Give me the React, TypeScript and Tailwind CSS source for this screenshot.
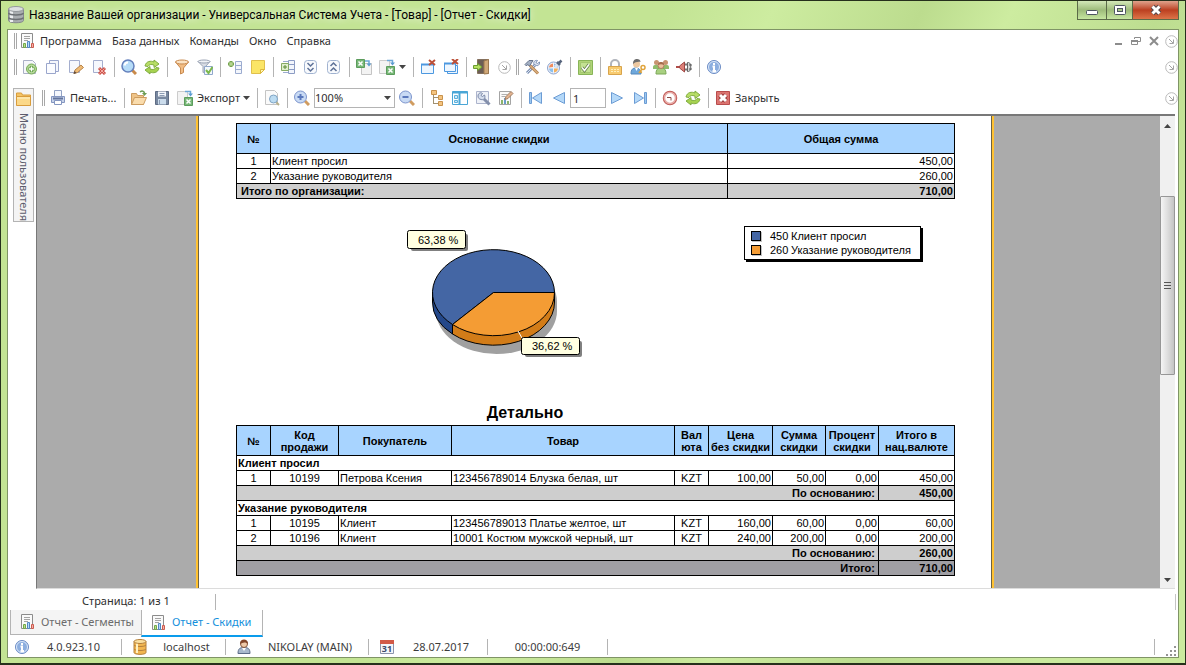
import React from 'react';

const icons: Record<string, React.ReactNode> = {
  report: (
    <>
      <path d="M2.500.5h11v14h-11z" fill="#fafafa" stroke="#8c8c8c" />
      <path d="M5 3.500h6M5 5.500h6M5 7.500h4" stroke="#a4a4a4" />
      <path d="M4.500 10.500h2v4h-2z" fill="#b9de8c" stroke="#72a84a" />
      <path d="M8.500 8.500h2v6h-2z" fill="#b4d8f8" stroke="#5088c4" />
      <path d="M12.500 10.500h2v4h-2z" fill="#f4b0a6" stroke="#cc5c50" />
    </>
  ),
  add: (
    <>
      <path d="M1.500 1.500h9l3 3v10h-12z" fill="#f6f7fb" stroke="#aab0c6" />
      <circle cx="9.500" cy="10" r="5" fill="#b4d898" stroke="#78ac58" />
      <path d="M9.500 7v6M6.500 10h6" stroke="#5a9a3c" strokeWidth="3" />
      <path d="M9.500 7.500v5M7 10h5" stroke="#fff" strokeWidth="1.500" />
    </>
  ),
  copy: (
    <>
      <path d="M4.500 1.500h9v11h-9z" fill="#f4f6fc" stroke="#9aa6cc" />
      <path d="M1.500 4.500h9v10h-9z" fill="#fbfcff" stroke="#9aa6cc" />
    </>
  ),
  edit: (
    <>
      <path d="M1.500 1.500h10v12h-10z" fill="#f6f8fd" stroke="#a4aece" />
      <path d="M6 14.500l1-3.500 6-5 2.500 2.500-6 5z" fill="#eebb77" stroke="#b88448" />
      <path d="M5.500 15l1-3 2 2z" fill="#5a4a40" />
    </>
  ),
  remove: (
    <>
      <path d="M2.500 1.500h9v12h-9z" fill="#f6f8fd" stroke="#a4aece" />
      <path d="M8 9l6 6M14 9l-6 6" stroke="#cc544c" strokeWidth="3" />
      <path d="M8.500 9.500l5 5M13.500 9.500l-5 5" stroke="#f4aaa2" />
    </>
  ),
  search: (
    <>
      <path d="M11 11l4 4" stroke="#c98a4a" strokeWidth="3" />
      <circle cx="7" cy="7" r="6" fill="#b6dcf8" stroke="#6480bc" strokeWidth="1.500" />
      <path d="M3.500 6.500a3.500 3.500 0 013.500-3" stroke="#fff" strokeWidth="2" fill="none" />
    </>
  ),
  refresh: (
    <>
      <path d="M1 7c1-5 6-5.500 9-4V1l5 4-5 3.500V6C7 5 5 5.500 4 7.500z" fill="#b8de66" stroke="#80ac40" />
      <path d="M15 9c-1 5-6 5.500-9 4v2l-5-4 5-3.500V10c3 1 5 .5 6-1.500z" fill="#a6d250" stroke="#80ac40" />
    </>
  ),
  funnel: (
    <>
      <path d="M1.500 3l5 6v6l3-1.500V9l5-6z" fill="#f2bd84" stroke="#c88a50" />
      <ellipse cx="8" cy="3" rx="6.500" ry="2" fill="#fbe3c4" stroke="#c88a50" />
    </>
  ),
  funnelCheck: (
    <>
      <path d="M1 2.500l5 5v6l2.500-1V7.500l4.500-5z" fill="#d9dde5" stroke="#9aa3b4" />
      <ellipse cx="7" cy="2.500" rx="6" ry="1.500" fill="#f2f4f8" stroke="#9aa3b4" />
      <path d="M7.500 7.500h8v8h-8z" fill="#f4f8fc" stroke="#90a8cc" />
      <path d="M9 11l2.500 3 4-6" stroke="#7cb84c" strokeWidth="2" fill="none" />
    </>
  ),
  rowAdd: (
    <>
      <path d="M8.500 2.500h6v12h-6zM8.500 6.500h6M8.500 10.500h6" fill="#f3f6fc" stroke="#9cacd0" />
      <path d="M4 2v6M1 5h6" stroke="#76a450" strokeWidth="3" />
      <path d="M4 3v4M2 5h4" stroke="#cbe6a6" />
    </>
  ),
  note: (
    <>
      <path d="M1.500 1.500h13v9l-4 4h-9z" fill="#fbe566" stroke="#e0c04c" />
      <path d="M14.500 10.500h-4v4z" fill="#fff6b4" stroke="#dcb83c" />
    </>
  ),
  columnAdd: (
    <>
      <path d="M8.500 1.500h6v13h-6zM8.500 5.500h6M8.500 10.500h6" fill="#f3f6fc" stroke="#8c9cc4" />
      <path d="M1.500 4.500h7v7h-7z" fill="#e0efd0" stroke="#86aa64" />
      <path d="M5 6v4M3 8h4" stroke="#5d8a38" />
      <path d="M3 2.500h5M3 13.500h5" stroke="#9cacd0" />
    </>
  ),
  expand: (
    <>
      <rect x="1.500" y="1.500" width="12" height="13" rx="3" fill="#f8fafd" stroke="#a0b2d0" />
      <path d="M4.500 4l3 3 3-3M4.500 9l3 3 3-3" stroke="#5e7298" strokeWidth="1.500" fill="none" />
    </>
  ),
  collapse: (
    <>
      <rect x="1.500" y="1.500" width="12" height="13" rx="3" fill="#f8fafd" stroke="#a0b2d0" />
      <path d="M4.500 7l3-3 3 3M4.500 12l3-3 3 3" stroke="#5e7298" strokeWidth="1.500" fill="none" />
    </>
  ),
  excelIn: (
    <>
      <path d="M5.500 4.500h10v11h-10z" fill="#f3f3f3" stroke="#c4c4c4" />
      <path d="M.5 .5h8v8h-8z" fill="#78b878" stroke="#5c9c5c" />
      <path d="M2.500 2.500l4 4M6.500 2.500l-4 4" stroke="#fff" strokeWidth="1.500" />
      <path d="M9 2h4v3" stroke="#6ca8d8" strokeWidth="1.500" fill="none" />
      <path d="M10.500 4.500h5l-2.500 3z" fill="#5c9cd0" />
    </>
  ),
  excelOut: (
    <>
      <path d="M.5 1.500h10v13h-10z" fill="#f3f3f3" stroke="#cccccc" />
      <path d="M7.500 7.500h8v8h-8z" fill="#78b878" stroke="#5c9c5c" />
      <path d="M9.500 9.500l4 4M13.500 9.500l-4 4" stroke="#fff" strokeWidth="1.500" />
      <path d="M8 1.500h5.500V4" stroke="#6ca8d8" strokeWidth="1.500" fill="none" />
      <path d="M11 3.500h5l-2.500 3z" fill="#5c9cd0" />
    </>
  ),
  windowClose: (
    <>
      <path d="M1.500 5.500h12v9h-12z" fill="#eef6fe" stroke="#4c98e0" />
      <path d="M1 5.500h13" stroke="#4c98e0" strokeWidth="2" />
      <path d="M9 1l6 5M15 1L9 6" stroke="#bc5038" strokeWidth="2" />
    </>
  ),
  windowsClose: (
    <>
      <path d="M4.500 6.500h10v8h-10z" fill="#eef6fe" stroke="#4c98e0" />
      <path d="M1.500 4.500h11v8h-11z" fill="#eef6fe" stroke="#4c98e0" />
      <path d="M1 4.500h12" stroke="#4c98e0" strokeWidth="2" />
      <path d="M9 0l6 5M15 0L9 5" stroke="#bc5038" strokeWidth="2" />
    </>
  ),
  exit: (
    <>
      <path d="M4.500.5h11v14h-11z" fill="#6c5e56" stroke="#84705e" />
      <path d="M11 2l4.500-1.500v14L11 15z" fill="#d0a878" stroke="#9c7850" />
      <path d="M.5 6.500h4v-2L9 8l-4.500 3.500v-2h-4z" fill="#b4e060" stroke="#6c9c30" />
    </>
  ),
  tools: (
    <>
      <path d="M3 14L11 6" stroke="#7c90b4" strokeWidth="3" />
      <path d="M3 14L11 6" stroke="#dde5f0" />
      <path d="M10 5.500c-1-3 1-4.500 3.500-4L12 3.500l1.500 1L15.500 3c.5 3-2 4.500-4 3z" fill="#dde5f0" stroke="#7c90b4" />
      <path d="M6 6.500l8 8" stroke="#b88450" strokeWidth="3" />
      <path d="M6 6.500l8 8" stroke="#f0d0a4" />
      <path d="M1 5.500L5 1.500h4L5.500 7l-2-1.500L2.500 7z" fill="#a4b0c4" stroke="#66748c" />
    </>
  ),
  palette: (
    <>
      <circle cx="6.500" cy="9" r="6" fill="#eef3fc" stroke="#8ca2cc" />
      <path d="M6 8V4.500A4.500 4.500 0 002 8.500z" fill="#f08c5c" />
      <path d="M7 8V4.500a4.500 4.500 0 014 4z" fill="#88b8e8" />
      <path d="M6 9.500v4a4.500 4.500 0 01-4-4z" fill="#8cc0ec" />
      <path d="M7 9.500v4a4.500 4.500 0 004-4z" fill="#f4b05c" />
      <path d="M8 8l5-5" stroke="#dfe5ee" strokeWidth="3" />
      <path d="M10 3l3 3M11.500 4.500L14.500 1.500" stroke="#56647c" strokeWidth="2.500" />
    </>
  ),
  check: (
    <>
      <path d="M1.500 1.500h14v14h-14z" fill="#b0d478" stroke="#88b458" />
      <path d="M3.500 3.500h10v10h-10z" fill="#c4e294" stroke="#a4c870" />
      <path d="M5 8.500l2.500 3 4.500-6" stroke="#64804c" strokeWidth="3" fill="none" />
      <path d="M5 8.500l2.500 3 4.500-6" stroke="#fff" strokeWidth="1.500" fill="none" />
    </>
  ),
  lock: (
    <>
      <path d="M4 8V5a4 4 0 018 0v3" stroke="#b0b4bc" strokeWidth="2" fill="none" />
      <path d="M1.500 7.500h13v8h-13z" fill="#f8cb70" stroke="#d8a44c" />
      <path d="M4 10.500h8M4 12.500h8" stroke="#fff0bd" strokeDasharray="2 1" />
    </>
  ),
  userKey: (
    <>
      <path d="M1 15c0-5 2-6 5-6s5 2 5 6z" fill="#6ea8dc" stroke="#5488bc" />
      <path d="M5 9l1.500 3L8 9z" fill="#fff" />
      <circle cx="6.500" cy="5" r="3.500" fill="#edc8a0" />
      <path d="M3 5c0-4 2-5 4-5s3.500 1 3.500 3C8 2.500 5 3 3 5z" fill="#6c6c6c" />
      <circle cx="13" cy="8.500" r="2" fill="none" stroke="#e0a43c" strokeWidth="1.500" />
      <path d="M12 10l-3 4M10 12.500l2 1" stroke="#e0a43c" strokeWidth="1.500" />
    </>
  ),
  users: (
    <>
      <path d="M0 8c0-3 6-3 6 0v2H0zM10 8c0-3 6-3 6 0v2h-6z" fill="#8fbc6a" />
      <circle cx="3.500" cy="3.500" r="2.500" fill="#c89470" />
      <circle cx="12.500" cy="3.500" r="2.500" fill="#c89470" />
      <path d="M3 15c0-5 2-6 5-6s5 1 5 6z" fill="#a8d080" stroke="#7ca858" />
      <circle cx="8" cy="6.500" r="3" fill="#ecc09c" stroke="#b07c5c" />
      <path d="M5 6c0-4 6-4 6 0-2-1-4-1-6 0z" fill="#a46c4c" />
    </>
  ),
  plug: (
    <>
      <path d="M0 8h5" stroke="#b04c48" strokeWidth="2" />
      <path d="M3.500 7l5-4v10l-5-4z" fill="#dc8078" stroke="#a04844" />
      <path d="M9 5.500h3M9 10.500h3" stroke="#777" strokeWidth="2" />
      <path d="M11.500 3.500h1c3 0 3 9 0 9h-1z" fill="#d8d8d8" stroke="#666" />
      <path d="M13 6h3M13 10h3" stroke="#555" />
    </>
  ),
  info: (
    <>
      <circle cx="8" cy="8" r="6.500" fill="#8caedf" stroke="#6c8cc4" />
      <circle cx="8" cy="8" r="5.500" fill="none" stroke="#dbe7f8" />
      <path d="M8 4v2M6.500 7.500H8V12M6.500 12h3.500" stroke="#fff" strokeWidth="2" fill="none" />
    </>
  ),
  print: (
    <>
      <path d="M4.500.5h7v6h-7z" fill="#f4f7fd" stroke="#92a2c4" />
      <path d="M1.500 6.500h13v6h-13z" fill="#c6d2ea" stroke="#8496c0" />
      <path d="M3 8.500h10" stroke="#62749c" strokeWidth="2" />
      <path d="M4.500 10.500h7v4h-7z" fill="#fff" stroke="#8496c0" />
    </>
  ),
  open: (
    <>
      <path d="M.5 14.500v-11h5l1 2h6v9z" fill="#efc488" stroke="#cc9c60" />
      <path d="M.5 14.500l3-7h12l-3 7z" fill="#fadcac" stroke="#cc9c60" />
      <path d="M9 2c2-1.500 4-1 4.500 1" stroke="#6c9c54" strokeWidth="1.500" fill="none" />
      <path d="M11 3h5l-2.500 3z" fill="#6c9c54" />
    </>
  ),
  save: (
    <>
      <path d="M1.500 1.500h13v13h-13z" fill="#7888a0" stroke="#5e6c84" />
      <path d="M4 1.500h8v5H4z" fill="#f2f5fa" />
      <path d="M4 9h8v5.500H4z" fill="#cbdcec" />
      <path d="M5.500 10v4M5.500 3.500h5M5.500 5.500h5" stroke="#8c9cb4" />
    </>
  ),
  preview: (
    <>
      <path d="M1.500.5h9l3 3v11h-12z" fill="#fafafa" stroke="#c4c4c4" />
      <path d="M12 12l3 3" stroke="#b8b08c" strokeWidth="2" />
      <circle cx="9.500" cy="9" r="4" fill="#bcdcf2" stroke="#80a4c4" />
    </>
  ),
  zoomIn: (
    <>
      <path d="M11 11l4 4" stroke="#d09c60" strokeWidth="3" />
      <circle cx="6.500" cy="7" r="6" fill="#c8daf4" stroke="#7c94cc" />
      <path d="M6.500 4v6M3.500 7h6" stroke="#5a78bc" strokeWidth="2" />
    </>
  ),
  zoomOut: (
    <>
      <path d="M11 11l4 4" stroke="#d09c60" strokeWidth="3" />
      <circle cx="6.500" cy="7" r="6" fill="#c8daf4" stroke="#7c94cc" />
      <path d="M3.500 7h6" stroke="#5a78bc" strokeWidth="2" />
    </>
  ),
  tree: (
    <>
      <path d="M4.500 5v9M4.500 7.500h5M4.500 13.500h5" stroke="#a09070" fill="none" />
      <path d="M2.500.5h5v4h-5zM9.500 5.500h4v4h-4zM9.500 11.500h4v4h-4z" fill="#f4c480" stroke="#c8924c" />
    </>
  ),
  panel: (
    <>
      <path d="M.5 1.500h15v13H.5z" fill="#fff" stroke="#4aa6d6" />
      <path d="M.5 2.500h15M7.500 2v12" stroke="#4aa6d6" strokeWidth="2" />
      <path d="M2.500 5.500h3v3h-3zM2.500 10.500h3v2h-3z" fill="#d0ecfa" stroke="#5cb0dc" />
    </>
  ),
  wrench: (
    <>
      <path d="M1.500 1.500h12v12h-12z" fill="#eef1f8" stroke="#acb4cc" />
      <path d="M9 9l5.500 5.500" stroke="#8490ac" strokeWidth="3" />
      <path d="M3 6c0-3 3-4 4.500-2.500L6 5.500l1.500 1L9.500 5c1.500 3-1 5.500-3.500 4.500C4 9 3 8 3 6z" fill="#d3dcec" stroke="#7a88a8" />
    </>
  ),
  editReport: (
    <>
      <path d="M1.500 1.500h11v13h-11z" fill="#fafafa" stroke="#a4a4a4" />
      <path d="M4 10v4M10 11v3" stroke="#8cb46c" strokeWidth="2" />
      <path d="M7 8v6" stroke="#6a9cc8" strokeWidth="2" />
      <path d="M3.500 4.500h6M3.500 6.500h4" stroke="#b0b0b0" />
      <path d="M7 9.500l1-3 5-5 2 2-5 5z" fill="#e4b490" stroke="#a07c60" />
    </>
  ),
  first: (
    <>
      <path d="M1.500 2.500h2v11h-2z" fill="#9cc8f0" stroke="#6c9cd4" />
      <path d="M13.500 2.500v11L4.500 8z" fill="#b4d8f8" stroke="#6c9cd4" />
    </>
  ),
  prev: <path d="M13.500 2.500v11L2.500 8z" fill="#b4d8f8" stroke="#6c9cd4" />,
  next: <path d="M2.500 2.500v11l11-5.500z" fill="#b4d8f8" stroke="#6c9cd4" />,
  last: (
    <>
      <path d="M12.500 2.500h2v11h-2z" fill="#9cc8f0" stroke="#6c9cd4" />
      <path d="M2.500 2.500v11l9-5.500z" fill="#b4d8f8" stroke="#6c9cd4" />
    </>
  ),
  clock: (
    <>
      <circle cx="8" cy="8" r="6.500" fill="#fff" stroke="#c05c58" strokeWidth="1.500" />
      <circle cx="8" cy="8" r="5.500" fill="none" stroke="#e8aaa6" strokeWidth="1.500" />
      <path d="M5 7.500h4v3" stroke="#8c4c48" fill="none" />
    </>
  ),
  closeBox: (
    <>
      <path d="M1.500 1.500h13v13h-13z" fill="#dc7470" stroke="#b84c4c" />
      <path d="M5 5l6 6M11 5l-6 6" stroke="#9c3c3c" strokeWidth="5" />
      <path d="M5 5l6 6M11 5l-6 6" stroke="#fff" strokeWidth="3" />
    </>
  ),
  folder: (
    <>
      <path d="M.5 14v-12h5l1 2h8v10z" fill="#f4c466" stroke="#d89c3c" />
      <path d="M.5 5.500h14v9H.5z" fill="#fbd888" stroke="#d89c3c" />
      <path d="M1 7h13" stroke="#fff3ca" />
    </>
  ),
  database: (
    <>
      <path d="M2 2.500v11c0 2.500 12 2.500 12 0v-11z" fill="#f2b650" stroke="#b4803c" />
      <path d="M2 6c1 2 11 2 12 0M2 10c1 2 11 2 12 0" stroke="#b4803c" fill="none" />
      <path d="M5 4v10" stroke="#fff0c0" strokeWidth="2" />
      <ellipse cx="8" cy="2.500" rx="6" ry="2" fill="#fbe0a0" stroke="#b4803c" />
    </>
  ),
  person: (
    <>
      <path d="M2 14.500c0-5 2-6 6-6s6 1 6 6z" fill="#a8b8cc" stroke="#5c6c88" />
      <path d="M6 9l2 3 2-3z" fill="#fff" />
      <circle cx="8" cy="5" r="3.500" fill="#efcaa8" stroke="#84563c" />
      <path d="M4 5c-.5-6 8.500-6 8 0-2-2-5-2-8 0z" fill="#84482c" />
    </>
  ),
};

const Icon: React.FC<{ name: string }> = ({ name }) => (
  <svg className="w-4 h-4 shrink-0" viewBox="0 0 16 16" fill="none" aria-hidden="true">
    {icons[name]}
  </svg>
);

const Tool: React.FC<{ name: string; label: string; children?: React.ReactNode }> = ({ name, label, children }) => (
  <button className="flex items-center gap-1 shrink-0 whitespace-nowrap" aria-label={label}>
    <Icon name={name} />
    {children}
  </button>
);

const Sep = () => <span className="w-px h-5 -mr-px shrink-0 bg-[#b4b4b4]" />;

const Grip = () => <span className="w-[3px] h-4 shrink-0 border-x border-[#a8a8a8]" />;

const Caret = () => (
  <svg className="w-[7px] h-1 shrink-0" viewBox="0 0 7 4" aria-hidden="true">
    <path d="M0 0h7L3.500 4z" fill="#444" />
  </svg>
);

const RoundArrow: React.FC<{ label: string }> = ({ label }) => (
  <button className="w-[13px] h-[13px] shrink-0" aria-label={label}>
    <svg className="w-[13px] h-[13px]" viewBox="0 0 13 13" fill="none">
      <circle cx="6.500" cy="6.500" r="5.800" stroke="#b9b9b9" />
      <path d="M4 4l4 4M8.500 4.500v4h-4" stroke="#a4a4a4" />
    </svg>
  </button>
);

const WindowButtons = () => (
  <div className="flex h-[19px] border border-t-0 border-[#5b6b48] text-white">
    <button className="w-7 flex items-center justify-center bg-gradient-to-b from-[#d3e8b8] via-[#9dbb7a] to-[#c6e6a0]" aria-label="Свернуть">
      <svg className="w-3 h-3" viewBox="0 0 12 12">
        <rect x=".5" y="6.500" width="11" height="4" rx="1" fill="#fff" stroke="#4c5460" />
      </svg>
    </button>
    <button className="w-[27px] flex items-center justify-center border-x border-[#5b6b48] bg-gradient-to-b from-[#d3e8b8] via-[#9dbb7a] to-[#c6e6a0]" aria-label="Развернуть">
      <svg className="w-3 h-3" viewBox="0 0 12 12">
        <rect x=".5" y="1.500" width="11" height="9" rx="1" fill="#fff" stroke="#4c5460" />
        <rect x="3.500" y="4.500" width="5" height="3" fill="#a9c888" stroke="#4c5460" />
      </svg>
    </button>
    <button className="w-[45px] flex items-center justify-center bg-gradient-to-b from-[#dfa28c] via-[#bb3f20] to-[#dd7448]" aria-label="Закрыть окно">
      <svg className="w-3 h-3" viewBox="0 0 12 12">
        <path d="M2.500 2.500l7 7M9.500 2.500l-7 7" stroke="#54484c" strokeWidth="5" />
        <path d="M2.500 2.500l7 7M9.500 2.500l-7 7" stroke="#fff" strokeWidth="3" />
      </svg>
    </button>
  </div>
);

const TitleBar = () => (
  <header className="flex items-start h-7 shrink-0 pl-[7px] pr-1.5">
    <svg className="w-4 h-[18px] mt-[5px] shrink-0" viewBox="0 0 16 18" aria-hidden="true">
      <path d="M.5 3v11.500c0 3 15 3 15 0V3z" fill="#a9adb0" stroke="#84888c" />
      <path d="M3.500 4v12" stroke="#eceef0" strokeWidth="3" />
      <path d="M.5 7c1 2.500 14 2.500 15 0M.5 11.500c1 2.500 14 2.500 15 0" fill="none" stroke="#6c7074" strokeWidth="1.500" />
      <ellipse cx="8" cy="3" rx="7.500" ry="2.500" fill="#dcdfe1" stroke="#94989c" />
    </svg>
    <h1 className="ml-[5px] leading-7 font-['Roboto',sans-serif] text-[12px] text-black whitespace-nowrap [text-shadow:0_0_8px_#fff]">
      Название Вашей организации - Универсальная Система Учета - [Товар] - [Отчет - Скидки]
    </h1>
    <span className="flex-1" />
    <WindowButtons />
  </header>
);

const MenuBar = () => (
  <nav className="flex items-center h-[22px] shrink-0 pl-1.5">
    <Grip />
    <span className="ml-0.5 flex">
      <Icon name="report" />
    </span>
    <div className="flex gap-2.5 ml-[5px]">
      {['Программа', 'База данных', 'Команды', 'Окно', 'Справка'].map((item) => (
        <button key={item} className="whitespace-nowrap">{item}</button>
      ))}
    </div>
    <span className="flex-1" />
    <div className="flex items-center gap-2 mr-1.5">
      <button aria-label="Свернуть отчет">
        <svg className="w-2.5 h-2.5" viewBox="0 0 10 10"><path d="M2 8h7" stroke="#8c8c8c" strokeWidth="2" /></svg>
      </button>
      <button aria-label="Восстановить отчет">
        <svg className="w-2.5 h-2.5" viewBox="0 0 10 10" fill="none">
          <path d="M3.500 3V1.500h6v4H7" stroke="#8c8c8c" />
          <path d="M.5 4.500h6v4h-6z" stroke="#8c8c8c" />
          <path d="M0 5h7" stroke="#8c8c8c" strokeWidth="2" />
        </svg>
      </button>
      <button aria-label="Закрыть отчет">
        <svg className="w-2.5 h-2.5" viewBox="0 0 10 10"><path d="M1 1l8 8M9 1L1 9" stroke="#8c8c8c" strokeWidth="2" /></svg>
      </button>
    </div>
    <RoundArrow label="Настройка меню" />
  </nav>
);

const MainToolbar = () => (
  <div className="flex items-center h-[30px] shrink-0 pl-1.5" role="toolbar">
    <Grip />
    <div className="flex items-center gap-[7px] ml-[5px]">
      <Tool name="add" label="Добавить" />
      <Tool name="copy" label="Копировать" />
      <Tool name="edit" label="Редактировать" />
      <Tool name="remove" label="Удалить" />
      <Sep />
      <Tool name="search" label="Поиск" />
      <Tool name="refresh" label="Обновить" />
      <Sep />
      <Tool name="funnel" label="Фильтр" />
      <Tool name="funnelCheck" label="Строка фильтра" />
      <Sep />
      <Tool name="rowAdd" label="Добавить строку" />
      <Tool name="note" label="Заметка" />
      <Sep />
      <Tool name="columnAdd" label="Столбцы" />
      <Tool name="expand" label="Раскрыть все" />
      <Tool name="collapse" label="Закрыть все" />
      <Sep />
      <Tool name="excelIn" label="Импорт" />
      <Tool name="excelOut" label="Выгрузка"><Caret /></Tool>
      <Sep />
      <Tool name="windowClose" label="Закрыть вкладку" />
      <Tool name="windowsClose" label="Закрыть все вкладки" />
      <Sep />
      <Tool name="exit" label="Выход" />
      <span className="flex ml-0.5"><RoundArrow label="Настройка панели" /></span>
    </div>
    <span className="flex ml-[5px]"><Grip /></span>
    <div className="flex items-center gap-[7px] ml-[5px] flex-1">
      <Tool name="tools" label="Настройки" />
      <Tool name="palette" label="Оформление" />
      <Sep />
      <Tool name="check" label="Задачи" />
      <Sep />
      <Tool name="lock" label="Блокировка" />
      <Tool name="userKey" label="Права" />
      <Tool name="users" label="Пользователи" />
      <Tool name="plug" label="Подключения" />
      <Sep />
      <Tool name="info" label="О программе" />
    </div>
    <RoundArrow label="Настройка панели инструментов" />
  </div>
);

const ReportToolbar = () => (
  <div className="flex items-center h-8 shrink-0 pl-1.5" role="toolbar">
    <Grip />
    <div className="flex items-center gap-[7px] ml-[5px] flex-1">
      <Tool name="print" label="Печать"><span className="w-[47px] text-left">Печать...</span></Tool>
      <Sep />
      <Tool name="open" label="Открыть" />
      <Tool name="save" label="Сохранить" />
      <Tool name="excelOut" label="Экспорт">
        <span className="w-[42px] text-left">Экспорт</span>
        <Caret />
      </Tool>
      <Sep />
      <Tool name="preview" label="Просмотр" />
      <Sep />
      <div className="flex items-center gap-1">
        <Tool name="zoomIn" label="Увеличить" />
        <div className="relative">
          <select aria-label="Масштаб" className="w-[81px] h-5 appearance-none border border-[#b4b4b4] bg-white">
            <option>100%</option>
          </select>
          <span className="absolute right-1 top-2 pointer-events-none"><Caret /></span>
        </div>
        <Tool name="zoomOut" label="Уменьшить" />
      </div>
      <Sep />
      <Tool name="tree" label="Структура" />
      <Tool name="panel" label="Миниатюры" />
      <Tool name="wrench" label="Параметры страницы" />
      <Tool name="editReport" label="Изменить отчет" />
      <Sep />
      <Tool name="first" label="Первая страница" />
      <div className="flex items-center gap-[3px]">
        <Tool name="prev" label="Предыдущая страница" />
        <input aria-label="Номер страницы" defaultValue="1" className="w-9 h-5 pl-0.5 border border-[#b4b4b4] bg-white" />
        <Tool name="next" label="Следующая страница" />
      </div>
      <Tool name="last" label="Последняя страница" />
      <Sep />
      <Tool name="clock" label="Остановить" />
      <Tool name="refresh" label="Обновить отчет" />
      <Sep />
      <Tool name="closeBox" label="Закрыть">Закрыть</Tool>
    </div>
    <RoundArrow label="Настройка панели отчета" />
  </div>
);

const summary = [
  ['1', 'Клиент просил', '450,00'],
  ['2', 'Указание руководителя', '260,00'],
];

const SummaryTable = () => (
  <table className="w-full table-fixed border-collapse leading-[14px] [&_td]:border [&_td]:border-black [&_th]:border [&_th]:border-black">
    <colgroup>
      <col className="w-[34px]" />
      <col />
      <col className="w-[227px]" />
    </colgroup>
    <thead>
      <tr className="h-[30px] bg-[#a8d4ff]">
        <th>№</th>
        <th>Основание скидки</th>
        <th>Общая сумма</th>
      </tr>
    </thead>
    <tbody>
      {summary.map(([num, reason, total]) => (
        <tr key={num}>
          <td className="text-center">{num}</td>
          <td className="pl-px">{reason}</td>
          <td className="text-right pr-px">{total}</td>
        </tr>
      ))}
      <tr className="bg-[#cecece] font-bold">
        <td colSpan={2} className="pl-1">Итого по организации:</td>
        <td className="text-right pr-px">710,00</td>
      </tr>
    </tbody>
  </table>
);

const PieChart = () => (
  <svg className="w-[190px] h-[135px] shrink-0" viewBox="400 225 190 135" role="img" aria-label="Скидки">
    <path d="M436 302a60.500 43 0 01121 0v9a60.500 43 0 01-121 0z" fill="#a0a0a0" />
    <g stroke="#000">
      <path d="M432.500 292v10a61 43 0 0020 32v-10z" fill="#24488a" />
      <path d="M452.500 324v10a61 43 0 00102-32v-10z" fill="#d27c18" />
      <path d="M493.500 292.500h61a61 43 0 10-102 32z" fill="#4466a4" />
      <path d="M493.500 292.500h61a61 43 0 01-102 32z" fill="#f49c34" />
    </g>
    <path d="M518 331l4 7" stroke="#fff" />
    <rect x="411" y="234" width="57" height="17" rx="2" fill="#808080" />
    <rect x="407.500" y="230.500" width="58" height="18" rx="2" fill="#ffffe1" stroke="#000" />
    <text x="418" y="244" fontSize="11">63,38 %</text>
    <rect x="525" y="341" width="57" height="16" rx="2" fill="#808080" />
    <rect x="521.500" y="337.500" width="58" height="17" rx="2" fill="#ffffe1" stroke="#000" />
    <text x="532" y="350" fontSize="11">36,62 %</text>
  </svg>
);

const Legend = () => (
  <ul className="w-[177px] h-[34px] mt-px pt-0.5 pl-1.5 border border-black bg-white shadow-[2px_2px_0_#000] leading-[14px] whitespace-nowrap">
    <li className="flex items-center">
      <span className="w-2.5 h-2.5 border border-black bg-[#4466a4] shadow-[1px_1px_0_#c0c0c0]" />
      <span className="ml-[9px] w-[21px]">450</span>
      <span>Клиент просил</span>
    </li>
    <li className="flex items-center">
      <span className="w-2.5 h-2.5 border border-black bg-[#f49c34] shadow-[1px_1px_0_#c0c0c0]" />
      <span className="ml-[9px] w-[21px]">260</span>
      <span>Указание руководителя</span>
    </li>
  </ul>
);

const groups = [
  {
    reason: 'Клиент просил',
    total: '450,00',
    rows: [['1', '10199', 'Петрова Ксения', '123456789014 Блузка белая, шт', 'KZT', '100,00', '50,00', '0,00', '450,00']],
  },
  {
    reason: 'Указание руководителя',
    total: '260,00',
    rows: [
      ['1', '10195', 'Клиент', '123456789013 Платье желтое, шт', 'KZT', '160,00', '60,00', '0,00', '60,00'],
      ['2', '10196', 'Клиент', '10001 Костюм мужской черный, шт', 'KZT', '240,00', '200,00', '0,00', '200,00'],
    ],
  },
];

const cellAlign = [
  'text-center', 'text-center', 'pl-px', 'pl-px', 'text-center',
  'text-right pr-px', 'text-right pr-px', 'text-right pr-px', 'text-right pr-px',
];

const DetailTable = () => (
  <table className="w-full table-fixed border-collapse leading-[14px] whitespace-nowrap [&_td]:border [&_td]:border-black [&_th]:border [&_th]:border-black">
    <colgroup>
      <col className="w-[34px]" />
      <col className="w-[68px]" />
      <col className="w-[113px]" />
      <col />
      <col className="w-[34px]" />
      <col className="w-16" />
      <col className="w-[53px]" />
      <col className="w-[53px]" />
      <col className="w-[76px]" />
    </colgroup>
    <thead>
      <tr className="h-[30px] bg-[#a8d4ff] leading-3">
        <th>№</th>
        <th>Код<br />продажи</th>
        <th>Покупатель</th>
        <th>Товар</th>
        <th>Вал<br />юта</th>
        <th>Цена<br />без скидки</th>
        <th>Сумма<br />скидки</th>
        <th>Процент<br />скидки</th>
        <th>Итого в<br />нац.валюте</th>
      </tr>
    </thead>
    <tbody>
      {groups.map((group) => (
        <React.Fragment key={group.reason}>
          <tr>
            <td colSpan={9} className="pl-px font-bold">{group.reason}</td>
          </tr>
          {group.rows.map((row) => (
            <tr key={row[1]}>
              {row.map((cell, i) => (
                <td key={i} className={cellAlign[i]}>{cell}</td>
              ))}
            </tr>
          ))}
          <tr className="bg-[#cecece] font-bold text-right">
            <td colSpan={8} className="pr-[3px]">По основанию:</td>
            <td className="pr-px">{group.total}</td>
          </tr>
        </React.Fragment>
      ))}
      <tr className="bg-[#a09fa4] font-bold text-right">
        <td colSpan={8} className="pr-[3px]">Итого:</td>
        <td className="pr-px">710,00</td>
      </tr>
    </tbody>
  </table>
);

const ReportPage = () => (
  <div className="w-[798px] shrink-0 border-x-2 border-[#ffc233]">
    <div className="h-full border-x border-[#6b6244] bg-white pt-[7px] pl-[37px] pr-9 font-['Liberation_Sans',sans-serif] text-[11px] text-black">
      <SummaryTable />
      <div className="flex justify-between items-start mt-[26px] pl-[164px] pr-[34px]">
        <PieChart />
        <Legend />
      </div>
      <h2 className="w-[578px] mt-[43px] mb-0.5 text-center text-[16px] leading-5 font-bold">Детально</h2>
      <DetailTable />
    </div>
  </div>
);

const ScrollBar = () => (
  <div className="w-[15px] shrink-0 flex flex-col items-center bg-[#f0f0f0]">
    <svg className="w-[7px] h-1 mt-2 shrink-0" viewBox="0 0 7 4"><path d="M0 4h7L3.500 0z" fill="#444" /></svg>
    <div className="flex-1 w-full pt-[68px]">
      <div className="h-[179px] flex flex-col items-center justify-center gap-0.5 border border-[#979797] rounded-[1px] bg-gradient-to-r from-[#f5f5f5] via-[#dedede] to-[#c4c4c4]">
        <span className="w-[7px] h-px bg-[#555]" />
        <span className="w-[7px] h-px bg-[#555]" />
        <span className="w-[7px] h-px bg-[#555]" />
      </div>
    </div>
    <svg className="w-[7px] h-1 mb-1.5 shrink-0" viewBox="0 0 7 4"><path d="M0 0h7L3.500 4z" fill="#444" /></svg>
  </div>
);

const StatusBar = () => (
  <footer className="flex items-center h-5 shrink-0 pl-1.5 pr-px text-[#3c3c3c]">
    <Icon name="info" />
    <span className="w-[87px] mr-1 text-center">4.0.923.10</span>
    <span className="w-px h-4 bg-[#b4b4b4]" />
    <span className="ml-2.5 flex"><Icon name="database" /></span>
    <span className="w-[77px] text-center">localhost</span>
    <span className="w-px h-4 bg-[#b4b4b4]" />
    <span className="ml-2.5 flex"><Icon name="person" /></span>
    <span className="w-[116px] text-center">NIKOLAY (MAIN)</span>
    <span className="w-px h-4 bg-[#b4b4b4]" />
    <svg className="w-4 h-4 ml-2.5" viewBox="0 0 16 16" aria-hidden="true">
      <path d="M1.500 1.500h13v13h-13z" fill="#f4f6fb" stroke="#8c94ac" />
      <path d="M1 1h14v4H1z" fill="#d25a48" />
      <text x="8" y="13" textAnchor="middle" fontSize="9" fontWeight="bold" fill="#3c4a6c">31</text>
    </svg>
    <span className="w-[92px] text-center">28.07.2017</span>
    <span className="w-px h-4 bg-[#b4b4b4]" />
    <span className="w-[119px] text-center">00:00:00:649</span>
    <span className="w-px h-4 bg-[#b4b4b4]" />
    <span className="flex-1" />
    <span className="w-px h-4 mr-2.5 bg-[#b4b4b4]" />
    <svg className="w-3 h-3 self-end" viewBox="0 0 12 12" aria-hidden="true">
      <path d="M9 1h2v2H9zM9 5h2v2H9zM5 5h2v2H5zM9 9h2v2H9zM5 9h2v2H5zM1 9h2v2H1z" fill="#949494" />
    </svg>
  </footer>
);

export default function App() {
  return (
    <div className="h-screen flex flex-col border border-[#26301c] border-b-2 bg-[linear-gradient(115deg,#c3e494_0%,#c3e494_45%,#cdeca0_52%,#bcdc8e_62%,#cdeca0_68%,#bddd90_78%,#cbea9e_90%)] font-['Noto_Sans',sans-serif] text-[11px] text-[#2e2e2e]">
      <TitleBar />
      <div className="flex-1 min-h-0 flex flex-col mx-1.5 mb-[5px] border border-[#7f9466] bg-white">
        <MenuBar />
        <MainToolbar />
        <div className="flex-1 min-h-0 flex">
          <aside className="ml-[5px] mt-1.5 mr-0.5 self-start">
            <button className="w-[21px] h-[134px] flex flex-col items-center gap-1.5 pt-0.5 border border-[#b4b4b4] bg-[#f4f4f4]">
              <Icon name="folder" />
              <span className="[writing-mode:vertical-rl] whitespace-nowrap leading-4 text-[#5c5c6c]">Меню пользователя</span>
            </button>
          </aside>
          <main className="flex-1 min-w-0 flex flex-col">
            <ReportToolbar />
            <div className="flex-1 min-h-0 flex mr-[3px] border-t-2 border-l border-[#787878] border-b border-b-[#dcdcdc] overflow-hidden">
              <div className="flex-1 min-w-0 flex justify-center pr-[7px] bg-[#ababab]">
                <ReportPage />
              </div>
              <ScrollBar />
            </div>
          </main>
        </div>
        <div className="flex items-center h-[21px] shrink-0 pl-[74px] pr-0.5 pt-1">
          <span className="w-[133px]">Страница: 1 из 1</span>
          <span className="w-px h-4 bg-[#b4b4b4]" />
          <span className="flex-1" />
          <span className="w-px h-4 bg-[#c4c4c4]" />
        </div>
        <div className="flex items-start h-[27px] shrink-0 pl-0.5" role="tablist">
          <button role="tab" aria-selected="false" className="w-[131px] h-[25px] flex items-center gap-1.5 pl-2 border-l border-b border-[#b4b4b4] bg-[#f4f4f4] text-[#6c6c6c] whitespace-nowrap">
            <Icon name="report" />
            Отчет - Сегменты
          </button>
          <button role="tab" aria-selected="true" className="w-[122px] h-[27px] flex items-center gap-1.5 pl-2 border-x border-b-2 border-x-[#b4b4b4] border-b-[#0a9cec] text-[#1490dc] whitespace-nowrap">
            <Icon name="report" />
            Отчет - Скидки
          </button>
        </div>
        <StatusBar />
      </div>
    </div>
  );
}
